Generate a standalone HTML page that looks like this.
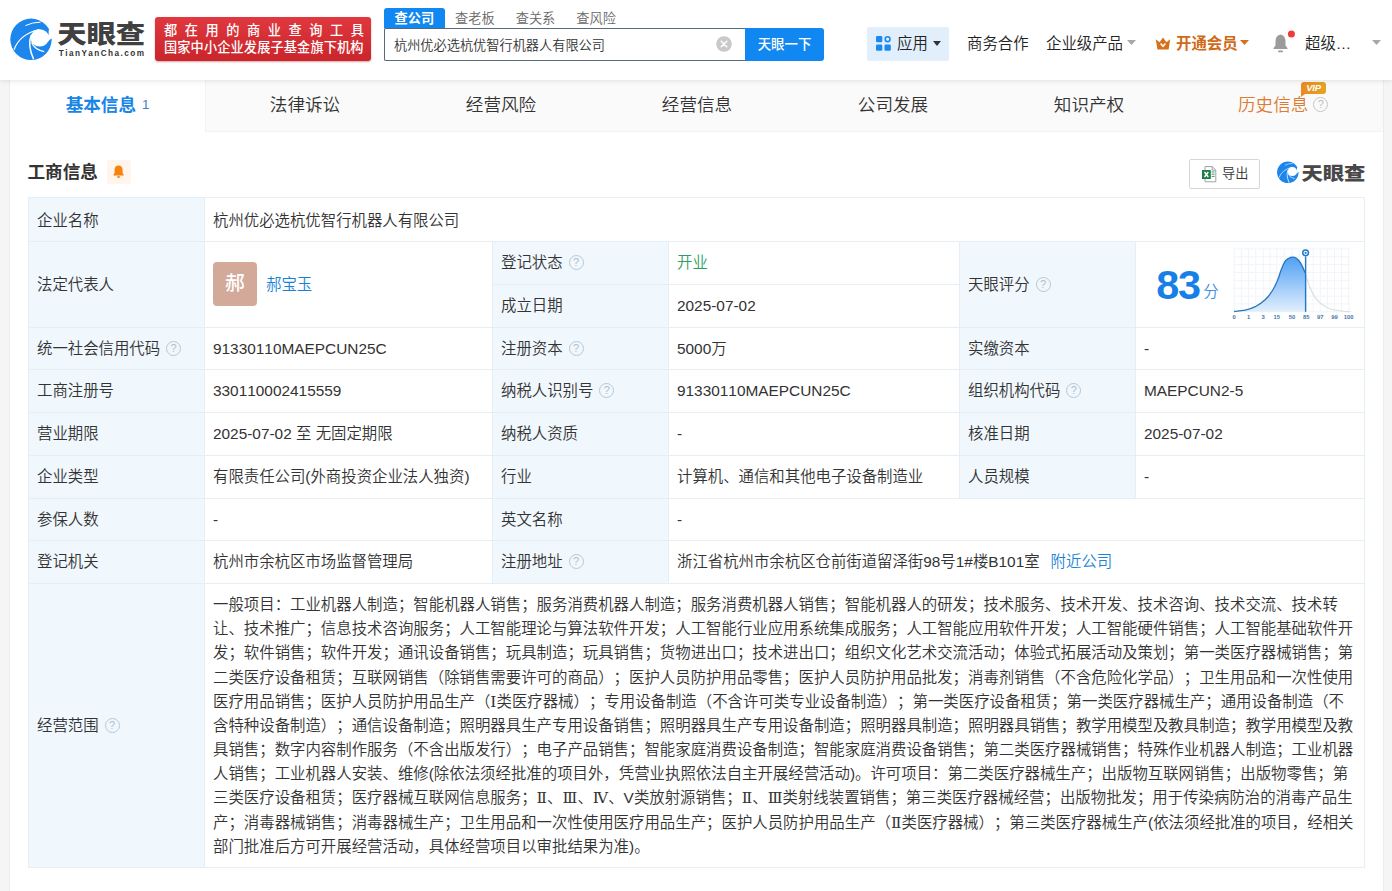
<!DOCTYPE html>
<html lang="zh-CN">
<head>
<meta charset="utf-8">
<title>天眼查</title>
<style>
*{box-sizing:border-box;margin:0;padding:0}
html,body{width:1392px;height:891px;overflow:hidden}
body{background:#f5f5f5;font-family:"Liberation Sans","Noto Sans CJK SC",sans-serif;color:#333;font-size:15px;position:relative;text-spacing-trim:space-all;font-kerning:none}
a{text-decoration:none;color:#1b84d8}
/* header */
#hd{position:absolute;left:0;top:0;width:1392px;height:80px;background:#fff;box-shadow:0 1px 5px rgba(0,0,0,.10);z-index:5}
#logo{position:absolute;left:10px;top:17px}
#slogan{position:absolute;left:155px;top:17px;width:216px;height:44px;border-radius:3px;background:linear-gradient(180deg,#e0383e 0%,#c9252b 100%);color:#fff;box-shadow:0 1px 2px rgba(120,0,0,.35)}
#slogan .l1{position:absolute;left:9px;top:4.5px;font-size:13.2px;letter-spacing:7.55px;white-space:nowrap;line-height:18px;font-weight:500}
#slogan .l2{position:absolute;left:9px;top:21.5px;font-size:13.2px;letter-spacing:0.12px;white-space:nowrap;line-height:18px;font-weight:500}
#stabs{position:absolute;left:384px;top:8px;height:20px;white-space:nowrap;font-size:13.2px;color:#666;font-weight:350}
#stabs span{display:inline-block;height:20px;line-height:21px;width:60.6px;text-align:center;vertical-align:top}
#stabs span.on{background:#1187f2;color:#fff;border-radius:3px 3px 0 0;font-weight:700}
#sbox{position:absolute;left:384px;top:28px;width:362px;height:33px;border:1px solid #566a7c;border-right:none;border-radius:2px 0 0 2px;background:#fff;font-size:13.2px;line-height:33.5px;padding-left:9px;color:#333;font-weight:350;white-space:nowrap}
#sclr{position:absolute;left:716px;top:35.5px;width:16px;height:16px}
#sbtn{position:absolute;left:745px;top:28px;width:79px;height:32.5px;background:#1187f2;color:#fff;font-size:13.4px;line-height:33px;text-align:center;border-radius:0 3px 3px 0;font-weight:500}
.nav{position:absolute;top:27px;height:34px;line-height:33px;font-size:15.4px;color:#222;white-space:nowrap;font-weight:350}
.nav svg,.abs{position:absolute}
.caret{display:inline-block;width:0;height:0;border-left:4px solid transparent;border-right:4px solid transparent;border-top:5px solid #999;vertical-align:middle;margin-left:5px;position:relative;top:-1px}
/* container */
#wrap{position:absolute;left:9px;top:80px;width:1375px;height:811px;background:#fff;border-left:1px solid #ececec;border-right:1px solid #ececec}
#tabs{position:absolute;left:0;top:0;width:1373px;height:52px;background:#fafafa;border-bottom:1px solid #f3f3f3}
.tab{position:absolute;top:0;height:52px;width:196px;line-height:50px;text-align:center;font-size:17.6px;color:#333;white-space:nowrap;font-weight:350}
.tab.on{background:#fff;color:#1886e6;font-weight:bold;border-right:1px solid #f3f3f3;width:195px}
.tab sup{font-size:13.2px;font-weight:400;color:#3f7fc4;margin-left:6px;vertical-align:2.5px;line-height:1}
.vip{position:absolute;left:114px;top:2px;width:25px;height:12px;background:linear-gradient(90deg,#ea8a1f,#e6a423);color:#fff;font-size:9.5px;font-weight:700;font-style:italic;line-height:12px;text-align:center;border-radius:3px 3px 3px 0;letter-spacing:-.3px;font-family:"Liberation Sans",sans-serif}
.vip:after{content:"";position:absolute;left:0;bottom:-3px;border-top:3px solid #ea8a1f;border-right:4px solid transparent}
/* section */
#ttl{position:absolute;left:27.5px;top:159px;font-size:17.6px;font-weight:bold;color:#333;line-height:26px;white-space:nowrap}
#bell{position:absolute;left:107px;top:160px;width:24px;height:24px;background:#fff5ec;border-radius:2px}
#exp{position:absolute;left:1189px;top:159px;width:71px;height:30px;border:1px solid #d3d6da;border-radius:2px;background:#fff;font-size:13px;color:#333}
#wm{position:absolute;left:1276px;top:160px}
#sc{position:absolute;left:1135px;top:241px;z-index:2}
/* table */
#tb{position:absolute;left:28px;top:197px;width:1336px;border-collapse:collapse;table-layout:fixed}
#tb td{border:1px solid #e6eef5;line-height:22px;padding:0 9px 0 8px;font-size:15.4px;font-weight:350;color:#333;vertical-align:middle;white-space:nowrap;overflow:hidden}
#tb td.k{background:#f0f7fd}
.q{display:inline-block;width:15px;height:15px;border:1.5px solid #b9c8d5;border-radius:50%;color:#aebfce;font-size:11px;font-style:normal;font-weight:400;line-height:12.5px;text-align:center;vertical-align:middle;margin-left:6px;position:relative;top:-1px;font-family:"Liberation Sans",sans-serif}
.ava{position:relative;top:-1px;display:inline-block;width:44px;height:44px;border-radius:4px;background:#d3a99a;color:#fff;font-size:19.8px;font-weight:500;line-height:43px;text-align:center;vertical-align:middle}
.nm{display:inline-block;margin-left:9px;vertical-align:middle;color:#1482d6}
#tb td.scope{padding-top:4px;padding-bottom:3px}
.scope .ln{height:24.2px;line-height:24.2px;white-space:nowrap;letter-spacing:.018px}
.rn{font-family:"DejaVu Serif",serif;font-size:15.4px}
</style>
</head>
<body>
<div id="hd">
  <svg id="logo" viewBox="0 0 150 50" width="150" height="50"><defs><g id="eye"><circle cx="20.8" cy="20.6" r="20.7" fill="#1c86ec"/>
<ellipse cx="29.6" cy="19.2" rx="9.3" ry="8.7" fill="#fff"/>
<path d="M38.5 11.6L44 10L44 19.9L41.6 19.9Q39.4 21 37.6 23L35 19L38.4 16.4Z" fill="#fff"/>
<path d="M3.8 31Q9.5 15.5 29 10.8" fill="none" stroke="#fff" stroke-width="1.25"/>
<path d="M15.2 6.9Q22 3.6 30.5 3.4" fill="none" stroke="#fff" stroke-width="1"/>
<path d="M23.4 40.6Q17 26 21 16.5" fill="none" stroke="#fff" stroke-width="1.5"/>
<path d="M21.4 23.5Q24 30.5 34 33" fill="none" stroke="#fff" stroke-width="1.3"/></g></defs><use href="#eye" x="0.2" y="1.7"/>
<text x="47.2" y="25.9" font-family="'Liberation Sans','Noto Sans CJK SC',sans-serif" font-weight="900" font-size="24.6" fill="#404040" textLength="88" lengthAdjust="spacingAndGlyphs">天眼查</text>
<text x="48.8" y="39" font-family="'Liberation Sans',sans-serif" font-weight="700" font-size="8.2" fill="#333" textLength="85.2" lengthAdjust="spacing">TianYanCha.com</text></svg>
  <div id="slogan"><div class="l1">都在用的商业查询工具</div><div class="l2">国家中小企业发展子基金旗下机构</div></div>
  <div id="stabs"><span class="on">查公司</span><span>查老板</span><span>查关系</span><span>查风险</span></div>
  <div id="sbox">杭州优必选杭优智行机器人有限公司</div>
  <div id="sbtn">天眼一下</div>

  <svg id="sclr" viewBox="0 0 16 16"><circle cx="8" cy="8" r="7.8" fill="#c9c9c9"/><path d="M5.2 5.2L10.8 10.8M10.8 5.2L5.2 10.8" stroke="#fff" stroke-width="1.5" stroke-linecap="round"/></svg>
  <div class="nav" style="left:867px;width:82px;background:#e1eefc;border-radius:3px">
    <svg style="left:9px;top:9px" width="15" height="15" viewBox="0 0 15 15"><rect x="0" y="0" width="6.3" height="6.3" rx="1.2" fill="#1b8af0"/><rect x="0" y="8.5" width="6.3" height="6.3" rx="1.2" fill="#1b8af0"/><rect x="8.5" y="8.5" width="6.3" height="6.3" rx="1.2" fill="#1b8af0"/><circle cx="11.6" cy="3.2" r="2.4" fill="none" stroke="#1b8af0" stroke-width="1.6"/></svg>
    <span class="abs" style="left:30px;top:0">应用</span>
    <svg style="left:66px;top:13.5px" width="8" height="5" viewBox="0 0 8 5"><path d="M0 0H8L4 5Z" fill="#333"/></svg>
  </div>
  <div class="nav" style="left:967px">商务合作</div>
  <div class="nav" style="left:1046px">企业级产品<svg style="left:81px;top:13px" width="9" height="5" viewBox="0 0 9 5"><path d="M0 0H9L4.5 5Z" fill="#a8a8a8"/></svg></div>
  <div class="nav" style="left:1155px;width:100px;color:#cf6a17;font-weight:700">
    <svg style="left:0;top:9.5px" width="16" height="13" viewBox="0 0 16 13"><path d="M0.8 2.2L4.6 5.2L8 0.6L11.4 5.2L15.2 2.2L13.6 12.4H2.4Z" fill="#d4711d"/><path d="M5.6 6.6L8 9.3L10.4 6.6" fill="none" stroke="#fff" stroke-width="1.5"/></svg>
    <span class="abs" style="left:21px;top:0">开通会员</span>
    <svg style="left:85px;top:13px" width="9" height="5" viewBox="0 0 9 5"><path d="M0 0H9L4.5 5Z" fill="#d4711d"/></svg>
  </div>
  <svg class="abs" style="left:1271px;top:28px" width="28" height="28" viewBox="0 0 28 28"><g transform="translate(0,4)"><path d="M9.5 2.6c-3.3 0.6-5 3.2-5 6.4v4.6l-2 2.4v1h14v-1l-2-2.4v-4.6c0-3.2-1.7-5.8-5-6.4z" fill="#9b9b9b"/><rect x="7" y="18.6" width="5" height="1.6" rx=".8" fill="#9b9b9b"/><circle cx="20.4" cy="1.9" r="3.5" fill="#f03a3a"/></g></svg>
  <div class="nav" style="left:1305px">超级…</div>
  <svg class="abs" style="left:1372px;top:40px" width="9" height="5" viewBox="0 0 9 5"><path d="M0 0H9L4.5 5Z" fill="#a8a8a8"/></svg>
</div>
<div id="wrap">
  <div id="tabs">
    <div class="tab on" style="left:0;width:196px">基本信息<sup>1</sup></div>
    <div class="tab" style="left:197px">法律诉讼</div>
    <div class="tab" style="left:393px">经营风险</div>
    <div class="tab" style="left:589px">经营信息</div>
    <div class="tab" style="left:785px">公司发展</div>
    <div class="tab" style="left:981px">知识产权</div>
    <div class="tab" style="left:1177px;color:#dd7a33;text-align:left;padding-left:51px">历史信息<i class="q" style="margin-left:5px;border-color:#c6c6c6;color:#bdbdbd;top:-2px">?</i><span class="vip">VIP</span></div>
  </div>
</div>
<div id="ttl">工商信息</div>
<div id="bell"><svg width="23" height="23" viewBox="0 0 23 23" style="display:block"><path d="M11.6 5.6c-2.6 0-4 1.9-4 4.3v3.2l-1.1 1.7v0.8h10.2v-0.8l-1.1-1.7v-3.2c0-2.4-1.4-4.3-4-4.3z" fill="#f7820c"/><path d="M9.9 16.3h3.4c0 1-.7 1.7-1.7 1.7s-1.7-.7-1.7-1.7z" fill="#f7820c"/></svg></div>
<div id="exp"><svg class="abs" style="left:11.5px;top:6px" width="16" height="17" viewBox="0 0 16 17"><path d="M3 .6h7.2l3.6 3.6v11.6H3z" fill="#fff" stroke="#9aa3ab" stroke-width="1"/><path d="M10.2 .6v3.6h3.6" fill="none" stroke="#9aa3ab" stroke-width="1"/><path d="M9.6 6h3M9.6 8.2h3M9.6 10.4h3" stroke="#3d9a62" stroke-width="1"/><rect x="0" y="4" width="8.8" height="9" fill="#1f7e48"/><path d="M2.5 6l3.8 5M6.3 6l-3.8 5" stroke="#fff" stroke-width="1.4"/></svg><span class="abs" style="left:32px;top:0;line-height:27px;font-size:13.2px;font-weight:350;white-space:nowrap">导出</span></div>
<svg id="wm" viewBox="0 0 90 24" width="90" height="24"><use href="#eye" transform="translate(1,1.6) scale(0.52)"/><text x="25.4" y="20.4" font-family="'Liberation Sans','Noto Sans CJK SC',sans-serif" font-weight="900" font-size="18.6" fill="#484848" textLength="64" lengthAdjust="spacingAndGlyphs">天眼查</text></svg>
<svg id="sc" width="231" height="86" viewBox="0 0 231 86"><defs><linearGradient id="gf" x1="0" y1="0" x2="0" y2="1"><stop offset="0" stop-color="#4fa0f3"/><stop offset="1" stop-color="#e2effd"/></linearGradient></defs>
<text x="21.3" y="58" font-family="'Liberation Sans',sans-serif" font-weight="700" font-size="41.4" fill="#1780e6" letter-spacing="-1.4">83</text>
<text x="68.3" y="56.4" font-family="'Liberation Sans','Noto Sans CJK SC',sans-serif" font-weight="350" font-size="15.4" fill="#3b8de6">分</text>
<path d="M99.2 7.9V70.8M113.5 7.9V70.8M128.2 7.9V70.8M141.8 7.9V70.8M156.9 7.9V70.8M171.2 7.9V70.8M185.3 7.9V70.8M199.5 7.9V70.8M213.6 7.9V70.8M106.3 7.9V70.8M120.8 7.9V70.8M135.0 7.9V70.8M149.3 7.9V70.8M164.1 7.9V70.8M178.2 7.9V70.8M192.4 7.9V70.8M206.5 7.9V70.8M98.2 7.9H215.7M98.2 15.8H215.7M98.2 23.6H215.7M98.2 31.5H215.7M98.2 39.4H215.7M98.2 47.2H215.7M98.2 55.1H215.7M98.2 62.9H215.7M98.2 70.8H215.7" stroke="#f2f4f8" stroke-width="1" fill="none"/>
<path d="M99.1 70.5C100.9 70.3 106.7 70.0 110.2 69.2C113.7 68.4 116.9 67.4 120.3 65.7C123.7 63.9 127.5 61.3 130.4 58.6C133.3 55.9 135.5 52.7 137.5 49.5C139.5 46.3 141.0 43.0 142.5 39.4C144.0 35.8 145.2 31.1 146.6 27.8C147.9 24.5 149.1 21.6 150.6 19.7C152.1 17.8 154.0 16.9 155.7 16.4C157.3 15.9 159.0 15.8 160.7 16.8C162.4 17.8 164.2 19.8 165.8 22.4C167.4 25.0 169.0 28.8 170.3 32.3L170.3 70.8L99.1 70.8Z" fill="url(#gf)"/>
<path d="M170.3 32.3C171.6 35.8 172.4 39.7 173.8 43.4C175.3 47.1 176.9 51.4 178.9 54.6C180.9 57.8 183.1 60.4 186.0 62.6C188.8 64.9 191.9 66.9 196.1 68.2C200.3 69.5 207.9 70.1 211.2 70.5C214.5 70.9 215.0 70.7 215.8 70.7" fill="none" stroke="#d9dbde" stroke-width="1.1"/>
<path d="M99.1 70.5C100.9 70.3 106.7 70.0 110.2 69.2C113.7 68.4 116.9 67.4 120.3 65.7C123.7 63.9 127.5 61.3 130.4 58.6C133.3 55.9 135.5 52.7 137.5 49.5C139.5 46.3 141.0 43.0 142.5 39.4C144.0 35.8 145.2 31.1 146.6 27.8C147.9 24.5 149.1 21.6 150.6 19.7C152.1 17.8 154.0 16.9 155.7 16.4C157.3 15.9 159.0 15.8 160.7 16.8C162.4 17.8 164.2 19.8 165.8 22.4C167.4 25.0 169.0 28.8 170.3 32.3" fill="none" stroke="#2a74be" stroke-width="1.3"/>
<path d="M170.6 15.5V70.8" stroke="#1f78c8" stroke-width="1.4"/>
<circle cx="170.6" cy="11.8" r="2.9" fill="#fff" stroke="#1f78c8" stroke-width="1.5"/><circle cx="170.6" cy="11.8" r="1.15" fill="#1f78c8"/>
<g font-family="'Liberation Sans',sans-serif" font-size="5.8" font-weight="700" fill="#4474a8"><text x="99.2" y="77.8" text-anchor="middle">0</text><text x="113.5" y="77.8" text-anchor="middle">1</text><text x="128.2" y="77.8" text-anchor="middle">3</text><text x="141.8" y="77.8" text-anchor="middle">15</text><text x="156.9" y="77.8" text-anchor="middle">50</text><text x="171.2" y="77.8" text-anchor="middle">85</text><text x="185.3" y="77.8" text-anchor="middle">97</text><text x="199.5" y="77.8" text-anchor="middle">99</text><text x="213.6" y="77.8" text-anchor="middle">100</text></g></svg>
<table id="tb">
<colgroup><col style="width:176px"><col style="width:288px"><col style="width:176px"><col style="width:291px"><col style="width:176px"><col style="width:229px"></colgroup>
<tr style="height:44px"><td class="k" style="padding-top:2px">企业名称</td><td colspan="5" style="padding-top:2px">杭州优必选杭优智行机器人有限公司</td></tr>

<tr style="height:43px"><td class="k" rowspan="2">法定代表人</td><td rowspan="2"><span class="ava">郝</span><a class="nm">郝宝玉</a></td><td class="k" style="height:43px">登记状态<i class="q">?</i></td><td style="color:#2b9f62">开业</td><td class="k" rowspan="2">天眼评分<i class="q">?</i></td><td rowspan="2" id="score"></td></tr>
<tr style="height:43px"><td class="k">成立日期</td><td>2025-07-02</td></tr>
<tr style="height:42px"><td class="k">统一社会信用代码<i class="q">?</i></td><td>91330110MAEPCUN25C</td><td class="k">注册资本<i class="q">?</i></td><td>5000万</td><td class="k">实缴资本</td><td>-</td></tr>
<tr style="height:43px"><td class="k">工商注册号</td><td>330110002415559</td><td class="k">纳税人识别号<i class="q">?</i></td><td>91330110MAEPCUN25C</td><td class="k">组织机构代码<i class="q">?</i></td><td>MAEPCUN2-5</td></tr>
<tr style="height:43px"><td class="k">营业期限</td><td>2025-07-02 至 无固定期限</td><td class="k">纳税人资质</td><td>-</td><td class="k">核准日期</td><td>2025-07-02</td></tr>
<tr style="height:43px"><td class="k">企业类型</td><td>有限责任公司(外商投资企业法人独资)</td><td class="k">行业</td><td>计算机、通信和其他电子设备制造业</td><td class="k">人员规模</td><td>-</td></tr>
<tr style="height:42px"><td class="k">参保人数</td><td>-</td><td class="k">英文名称</td><td colspan="3">-</td></tr>
<tr style="height:43px"><td class="k">登记机关</td><td>杭州市余杭区市场监督管理局</td><td class="k">注册地址<i class="q">?</i></td><td colspan="3">浙江省杭州市余杭区仓前街道留泽街98号1#楼B101室<a style="margin-left:11px">附近公司</a></td></tr>
<tr style="height:284px"><td class="k">经营范围<i class="q">?</i></td><td colspan="5" class="scope"><div class="ln">一般项目：工业机器人制造；智能机器人销售；服务消费机器人制造；服务消费机器人销售；智能机器人的研发；技术服务、技术开发、技术咨询、技术交流、技术转</div><div class="ln">让、技术推广；信息技术咨询服务；人工智能理论与算法软件开发；人工智能行业应用系统集成服务；人工智能应用软件开发；人工智能硬件销售；人工智能基础软件开</div><div class="ln">发；软件销售；软件开发；通讯设备销售；玩具制造；玩具销售；货物进出口；技术进出口；组织文化艺术交流活动；体验式拓展活动及策划；第一类医疗器械销售；第</div><div class="ln">二类医疗设备租赁；互联网销售（除销售需要许可的商品）；医护人员防护用品零售；医护人员防护用品批发；消毒剂销售（不含危险化学品）；卫生用品和一次性使用</div><div class="ln">医疗用品销售；医护人员防护用品生产（<span class="rn">Ⅰ</span>类医疗器械）；专用设备制造（不含许可类专业设备制造）；第一类医疗设备租赁；第一类医疗器械生产；通用设备制造（不</div><div class="ln">含特种设备制造）；通信设备制造；照明器具生产专用设备销售；照明器具生产专用设备制造；照明器具制造；照明器具销售；教学用模型及教具制造；教学用模型及教</div><div class="ln">具销售；数字内容制作服务（不含出版发行）；电子产品销售；智能家庭消费设备制造；智能家庭消费设备销售；第二类医疗器械销售；特殊作业机器人制造；工业机器</div><div class="ln">人销售；工业机器人安装、维修(除依法须经批准的项目外，凭营业执照依法自主开展经营活动)。许可项目：第二类医疗器械生产；出版物互联网销售；出版物零售；第</div><div class="ln">三类医疗设备租赁；医疗器械互联网信息服务；<span class="rn">Ⅱ</span>、<span class="rn">Ⅲ</span>、<span class="rn">Ⅳ</span>、V类放射源销售；<span class="rn">Ⅱ</span>、<span class="rn">Ⅲ</span>类射线装置销售；第三类医疗器械经营；出版物批发；用于传染病防治的消毒产品生</div><div class="ln">产；消毒器械销售；消毒器械生产；卫生用品和一次性使用医疗用品生产；医护人员防护用品生产（<span class="rn">Ⅱ</span>类医疗器械）；第三类医疗器械生产(依法须经批准的项目，经相关</div><div class="ln">部门批准后方可开展经营活动，具体经营项目以审批结果为准)。</div></td></tr>
</table>
</body>
</html>
